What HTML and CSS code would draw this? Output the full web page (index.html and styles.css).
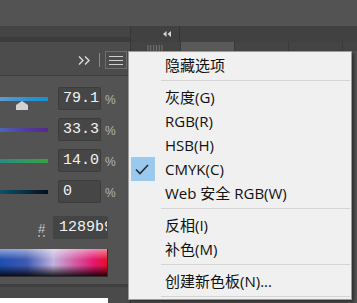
FILE: index.html
```html
<!DOCTYPE html>
<html lang="zh-CN">
<head>
    <meta charset="UTF-8">
    <title>颜色面板菜单</title>
    <link rel="stylesheet" href="styles.css">
</head>
<body>
    <div class="top"></div>
    <div class="dock">
        <div class="panel">
            <div class="panel-head"></div>
            <div class="toolbar">
                <svg class="more" width="12" height="9" viewBox="0 0 12 9"><polyline points="1,0.5 5,4.5 1,8.5" fill="none" stroke="#dcdcdc" stroke-width="1.4"/><polyline points="7,0.5 11,4.5 7,8.5" fill="none" stroke="#dcdcdc" stroke-width="1.4"/></svg>
                <span class="vsep"></span>
                <span class="menu-btn"><i></i><i></i><i></i></span>
            </div>
            <div class="sliders">
                <div class="row">
                    <div class="slider"><div class="bar bar-c"></div><span class="thumb"></span></div>
                    <div class="field"><span>79.12</span></div>
                    <span class="pct">%</span>
                </div>
                <div class="row">
                    <div class="slider"><div class="bar bar-m"></div></div>
                    <div class="field"><span>33.33</span></div>
                    <span class="pct">%</span>
                </div>
                <div class="row">
                    <div class="slider"><div class="bar bar-y"></div></div>
                    <div class="field"><span>14.07</span></div>
                    <span class="pct">%</span>
                </div>
                <div class="row">
                    <div class="slider"><div class="bar bar-k"></div></div>
                    <div class="field"><span>0</span></div>
                    <span class="pct">%</span>
                </div>
                <div class="hex-row">
                    <span class="hash">#</span>
                    <div class="field hex"><span>1289b9</span></div>
                </div>
                <div class="ramp"></div>
            </div>
            <div class="panel-foot">
                <div class="white-strip"></div>
            </div>
        </div>
        <div class="side">
            <div class="side-head">
                <span class="collapse">
                    <svg width="8" height="6" viewBox="0 0 8 6"><polygon points="0,3 3.5,0 3.5,6" fill="#d4d4d4"/><polygon points="4.5,3 8,0 8,6" fill="#d4d4d4"/></svg>
                </span>
            </div>
            <div class="tabs">
                <span class="tab grip">||||||</span>
                <span class="tab active"></span>
                <span class="tab"></span>
                <span class="tab"></span>
                <span class="tab last"></span>
            </div>
        </div>
    </div>

    <div class="menu">
        <div class="item">隐藏选项</div>
        <div class="sep"></div>
        <div class="item">灰度(G)</div>
        <div class="item">RGB(R)</div>
        <div class="item">HSB(H)</div>
        <div class="item checked">
            <span class="check">
                <svg width="24" height="24" viewBox="0 0 24 24"><polyline points="5,12.5 9,16.5 17,8" fill="none" stroke="#2b2b2b" stroke-width="1.6"/></svg>
            </span>
            CMYK(C)
        </div>
        <div class="item">Web 安全 RGB(W)</div>
        <div class="sep"></div>
        <div class="item">反相(I)</div>
        <div class="item">补色(M)</div>
        <div class="sep"></div>
        <div class="item">创建新色板(N)...</div>
        <div class="sep"></div>
    </div>
</body>
</html>
```

FILE: styles.css
```css
body {
    margin: 0;
    width: 357px;
    height: 303px;
    overflow: hidden;
    background-color: #535353;
    font-family: 'Liberation Sans', sans-serif;
    position: relative;
}

.top {
    height: 26px;
    background-color: #535353;
}

.dock {
    display: flex;
    height: 277px;
}

/* panneau de gauche */
.panel {
    width: 130px;
    flex-shrink: 0;
    display: flex;
    flex-direction: column;
    border-right: 1px solid #383838;
    background-color: #535353;
}

.panel-head {
    height: 11px;
    background-color: #444444;
    border-bottom: 5px solid #3b3b3b;
}

.toolbar {
    height: 34px;
    box-sizing: border-box;
    display: flex;
    justify-content: flex-end;
    align-items: flex-start;
    padding: 9px 3px 0 0;
    background-color: #4c4c4c;
    border-bottom: 1px solid #3d3d3d;
}

.more {
    display: block;
    margin-top: 5px;
    margin-right: 9px;
}

.vsep {
    width: 1px;
    height: 14px;
    background-color: #8a8a8a;
    margin-top: 2px;
    margin-right: 5px;
}

.menu-btn {
    width: 14px;
    height: 16px;
    border: 1px solid #6e6e6e;
    display: flex;
    flex-direction: column;
    justify-content: center;
    gap: 3px;
    padding: 0 3px;
}

.menu-btn i {
    display: block;
    height: 1px;
    background-color: #cfcfcf;
}

.sliders {
    padding-top: 11px;
    display: flex;
    flex-direction: column;
    gap: 8px;
}

.row {
    display: flex;
    align-items: flex-start;
    height: 23px;
}

.slider {
    width: 48px;
    margin-right: 10px;
    position: relative;
    padding-top: 10px;
}

.bar {
    height: 4px;
}

.bar-c { background: linear-gradient(to right, #5c9dcc, #2a93d2 60%, #1590d3); }
.bar-m { background: linear-gradient(to right, #4f63b6, #5138a0 60%, #572a88); }
.bar-y { background: linear-gradient(to right, #2b8b82, #2f9a5c 60%, #35a33f); }
.bar-k { background: linear-gradient(to right, #0e4e70, #082a40 60%, #050d18); }

.thumb {
    position: absolute;
    left: 16px;
    top: 14px;
    width: 12px;
    height: 9px;
    background-color: #d2d2d2;
    clip-path: polygon(50% 0, 100% 45%, 100% 100%, 0 100%, 0 45%);
}

.field {
    width: 43px;
    height: 23px;
    box-sizing: border-box;
    background-color: #464646;
    border: 1px solid #3c3c3c;
    border-radius: 2px;
    color: #f2f2f2;
    font-family: 'Liberation Mono', monospace;
    font-size: 15px;
    line-height: 21px;
    padding-left: 4px;
    white-space: nowrap;
    overflow: hidden;
}

.field span {
    display: block;
    overflow: hidden;
}

.pct {
    color: #b4b4b4;
    font-size: 12px;
    margin-left: 4px;
    margin-top: 6px;
}

.hex-row {
    display: flex;
    align-items: center;
    height: 23px;
    margin-top: 5px;
    padding-left: 38px;
}

.hash {
    color: #c8c8c8;
    font-size: 13px;
    border-bottom: 2px dotted #9a9a9a;
    line-height: 12px;
    width: 7px;
    margin-right: 8px;
    margin-top: 4px;
}

.field.hex {
    width: 55px;
    background-color: #444444;
    border-color: #444444;
    padding-left: 5px;
}

.ramp {
    width: 107px;
    height: 27px;
    margin-top: 2px;
    border-right: 1px solid #2e2e2e;
    border-bottom: 1px solid #2e2e2e;
    background:
        linear-gradient(to bottom, rgba(255,255,255,0.5), rgba(255,255,255,0) 40%, rgba(0,0,0,0) 60%, rgba(0,0,0,0.85)),
        linear-gradient(to right, #1e4cb0, #3f5ab2 25%, #c2b2dc 50%, #d4559f 72%, #e5156e 88%, #e4102c);
}

.panel-foot {
    margin-top: auto;
    height: 16px;
    border-top: 3px solid #3f3f3f;
    background-color: #4a4a4a;
    display: flex;
    align-items: flex-end;
}

.white-strip {
    width: 108px;
    height: 5px;
    background-color: #ffffff;
}

/* colonne de droite */
.side {
    flex: 1;
    min-width: 0;
    display: flex;
    flex-direction: column;
    background-color: #535353;
}

.side-head {
    height: 16px;
    background-color: #414141;
    display: flex;
}

.collapse {
    width: 49px;
    border-right: 1px solid #353535;
    display: flex;
    align-items: center;
    justify-content: flex-end;
    padding-right: 8px;
    box-sizing: border-box;
}

.collapse svg {
    display: block;
}

.tabs {
    display: flex;
    height: 9px;
    background-color: #3a3a3a;
    gap: 1px;
    overflow: hidden;
}

.tab {
    width: 53px;
    flex-shrink: 0;
    background-color: #444444;
}

.tab.grip {
    width: 49px;
    color: #9a9a9a;
    font-size: 7px;
    text-align: center;
    letter-spacing: 1px;
    line-height: 12px;
    overflow: hidden;
}

.tab.active {
    background-color: #595959;
}

.tab.last {
    flex: 1;
    flex-shrink: 1;
}

/* menu déroulant */
.menu {
    position: absolute;
    left: 128px;
    top: 51px;
    width: 224px;
    height: 249px;
    box-sizing: border-box;
    background-color: #f0f0f0;
    border: 1px solid #9c9c9c;
    box-shadow: 2px 2px 3px rgba(0, 0, 0, 0.45);
    padding-top: 1px;
    font-family: 'Open Sans', 'Noto Sans CJK SC', sans-serif;
    font-size: 15px;
    color: #111111;
}

.item {
    height: 24px;
    line-height: 24px;
    padding-left: 36px;
    position: relative;
    white-space: nowrap;
}

.check {
    position: absolute;
    left: 2px;
    top: 0;
    width: 24px;
    height: 24px;
    background-color: #99c9ef;
}

.check svg {
    display: block;
}

.sep {
    height: 1px;
    background-color: #d4d4d4;
    margin: 3px 1px 4px 32px;
}
```
